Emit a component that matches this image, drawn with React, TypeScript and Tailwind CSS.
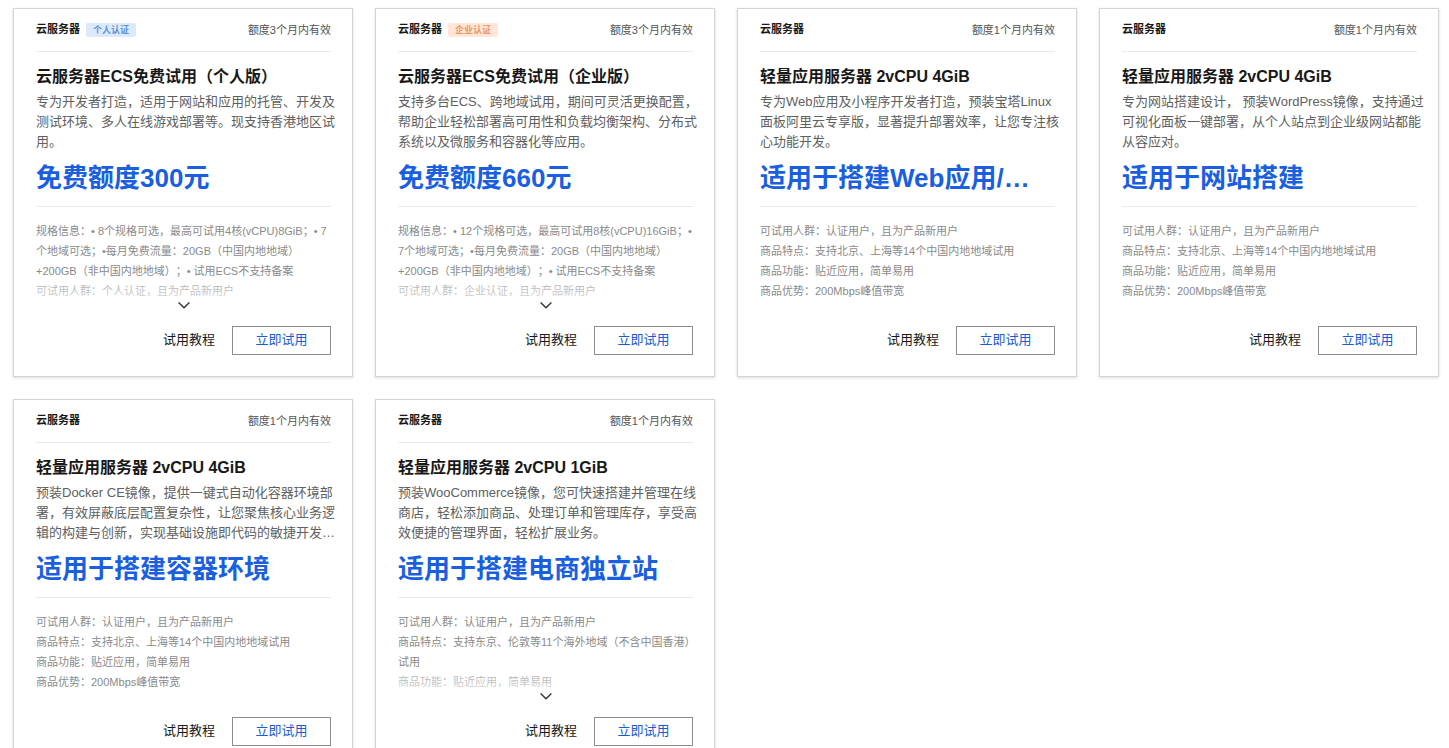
import React from "react";

type Badge = { label: string; tone: "personal" | "enterprise" };

type Offer = {
  badge?: Badge;
  validity: string;
  title: string;
  description: string;
  highlight: string;
  details: string[];
  expandable?: boolean;
};

const offers: Offer[] = [
  {
    badge: { label: "个人认证", tone: "personal" },
    validity: "额度3个月内有效",
    title: "云服务器ECS免费试用（个人版）",
    description:
      "专为开发者打造，适用于网站和应用的托管、开发及测试环境、多人在线游戏部署等。现支持香港地区试用。",
    highlight: "免费额度300元",
    details: [
      "规格信息：• 8个规格可选，最高可试用4核(vCPU)8GiB；• 7个地域可选；•每月免费流量：20GB（中国内地地域）+200GB（非中国内地地域）；• 试用ECS不支持备案",
      "可试用人群：个人认证，且为产品新用户",
    ],
    expandable: true,
  },
  {
    badge: { label: "企业认证", tone: "enterprise" },
    validity: "额度3个月内有效",
    title: "云服务器ECS免费试用（企业版）",
    description:
      "支持多台ECS、跨地域试用，期间可灵活更换配置，帮助企业轻松部署高可用性和负载均衡架构、分布式系统以及微服务和容器化等应用。",
    highlight: "免费额度660元",
    details: [
      "规格信息：• 12个规格可选，最高可试用8核(vCPU)16GiB；• 7个地域可选；•每月免费流量：20GB（中国内地地域）+200GB（非中国内地地域）；• 试用ECS不支持备案",
      "可试用人群：企业认证，且为产品新用户",
    ],
    expandable: true,
  },
  {
    validity: "额度1个月内有效",
    title: "轻量应用服务器 2vCPU 4GiB",
    description:
      "专为Web应用及小程序开发者打造，预装宝塔Linux面板阿里云专享版，显著提升部署效率，让您专注核心功能开发。",
    highlight: "适用于搭建Web应用/…",
    details: [
      "可试用人群：认证用户，且为产品新用户",
      "商品特点：支持北京、上海等14个中国内地地域试用",
      "商品功能：贴近应用，简单易用",
      "商品优势：200Mbps峰值带宽",
    ],
  },
  {
    validity: "额度1个月内有效",
    title: "轻量应用服务器 2vCPU 4GiB",
    description:
      "专为网站搭建设计， 预装WordPress镜像，支持通过可视化面板一键部署，从个人站点到企业级网站都能从容应对。",
    highlight: "适用于网站搭建",
    details: [
      "可试用人群：认证用户，且为产品新用户",
      "商品特点：支持北京、上海等14个中国内地地域试用",
      "商品功能：贴近应用，简单易用",
      "商品优势：200Mbps峰值带宽",
    ],
  },
  {
    validity: "额度1个月内有效",
    title: "轻量应用服务器 2vCPU 4GiB",
    description:
      "预装Docker CE镜像，提供一键式自动化容器环境部署，有效屏蔽底层配置复杂性，让您聚焦核心业务逻辑的构建与创新，实现基础设施即代码的敏捷开发…",
    highlight: "适用于搭建容器环境",
    details: [
      "可试用人群：认证用户，且为产品新用户",
      "商品特点：支持北京、上海等14个中国内地地域试用",
      "商品功能：贴近应用，简单易用",
      "商品优势：200Mbps峰值带宽",
    ],
  },
  {
    validity: "额度1个月内有效",
    title: "轻量应用服务器 2vCPU 1GiB",
    description:
      "预装WooCommerce镜像，您可快速搭建并管理在线商店，轻松添加商品、处理订单和管理库存，享受高效便捷的管理界面，轻松扩展业务。",
    highlight: "适用于搭建电商独立站",
    details: [
      "可试用人群：认证用户，且为产品新用户",
      "商品特点：支持东京、伦敦等11个海外地域（不含中国香港）试用",
      "商品功能：贴近应用，简单易用",
    ],
    expandable: true,
  },
];

const badgeTones = {
  personal: "bg-[#dbe9fd] text-[#5d93d8]",
  enterprise: "bg-[#ffe6d8] text-[#ea9a64]",
};

function OfferCard({ offer }: { offer: Offer }) {
  return (
    <article className="flex flex-col border border-[#d4d4d4] bg-white pr-[21px] pb-[21px] pl-[22px] shadow-[0_1px_3px_rgba(0,0,0,0.14)]">
      <header className="flex h-[43px] items-center justify-between border-b border-[#ebebeb]">
        <div className="flex items-center gap-1.5">
          <span className="pb-0.5 text-[11px] leading-4 font-bold">云服务器</span>
          {offer.badge && (
            <span
              className={`rounded-xs px-[7px] text-[9px] leading-[14px] font-bold ${badgeTones[offer.badge.tone]}`}
            >
              {offer.badge.label}
            </span>
          )}
        </div>
        <span className="text-[11px] leading-4 text-[#555]">{offer.validity}</span>
      </header>

      <h3 className="mt-[13px] truncate text-base leading-6 font-bold">{offer.title}</h3>
      <p className="-mr-2 mt-[3px] min-h-[60px] text-[13px] leading-5 text-[#606060]">
        {offer.description}
      </p>
      <p className="mt-[9px] border-b border-[#ebebeb] pb-[11px] text-[26px] leading-[34px] font-bold whitespace-nowrap text-[#1a5fe0]">
        {offer.highlight}
      </p>

      <div className="relative -mr-1 mt-3.5 h-20 overflow-hidden text-[11px] leading-5 text-[#8a8a8a]">
        {offer.details.map((line) => (
          <p key={line}>{line}</p>
        ))}
        {offer.expandable && (
          <div className="absolute inset-x-0 bottom-0 h-6 bg-linear-to-b from-white/20 to-white/70" />
        )}
      </div>

      <div className="flex h-[25px] items-start justify-center pt-px">
        {offer.expandable && (
          <button type="button" aria-label="展开" className="block">
            <svg width="12" height="7" viewBox="0 0 12 7" fill="none" stroke="#333" strokeWidth="1.4">
              <path d="M0.6 0.6 L6 5.8 L11.4 0.6" />
            </svg>
          </button>
        )}
      </div>

      <footer className="flex items-center justify-end gap-[17px] text-[13px] leading-5">
        <a href="#" className="pb-0.5 text-[#181818]">
          试用教程
        </a>
        <button
          type="button"
          className="h-[29px] w-[99px] border border-[#8c8c8c] pb-0.5 text-[#1a5bd0]"
        >
          立即试用
        </button>
      </footer>
    </article>
  );
}

export default function App() {
  return (
    <main className="grid grid-cols-1 gap-[22px] bg-white pt-2 pr-2.5 pb-5 pl-[13px] font-['Liberation_Sans','Noto_Sans_CJK_SC',sans-serif] text-[#181818] [text-spacing-trim:space-all] sm:grid-cols-2 lg:grid-cols-4">
      {offers.map((offer) => (
        <OfferCard key={offer.highlight} offer={offer} />
      ))}
    </main>
  );
}
